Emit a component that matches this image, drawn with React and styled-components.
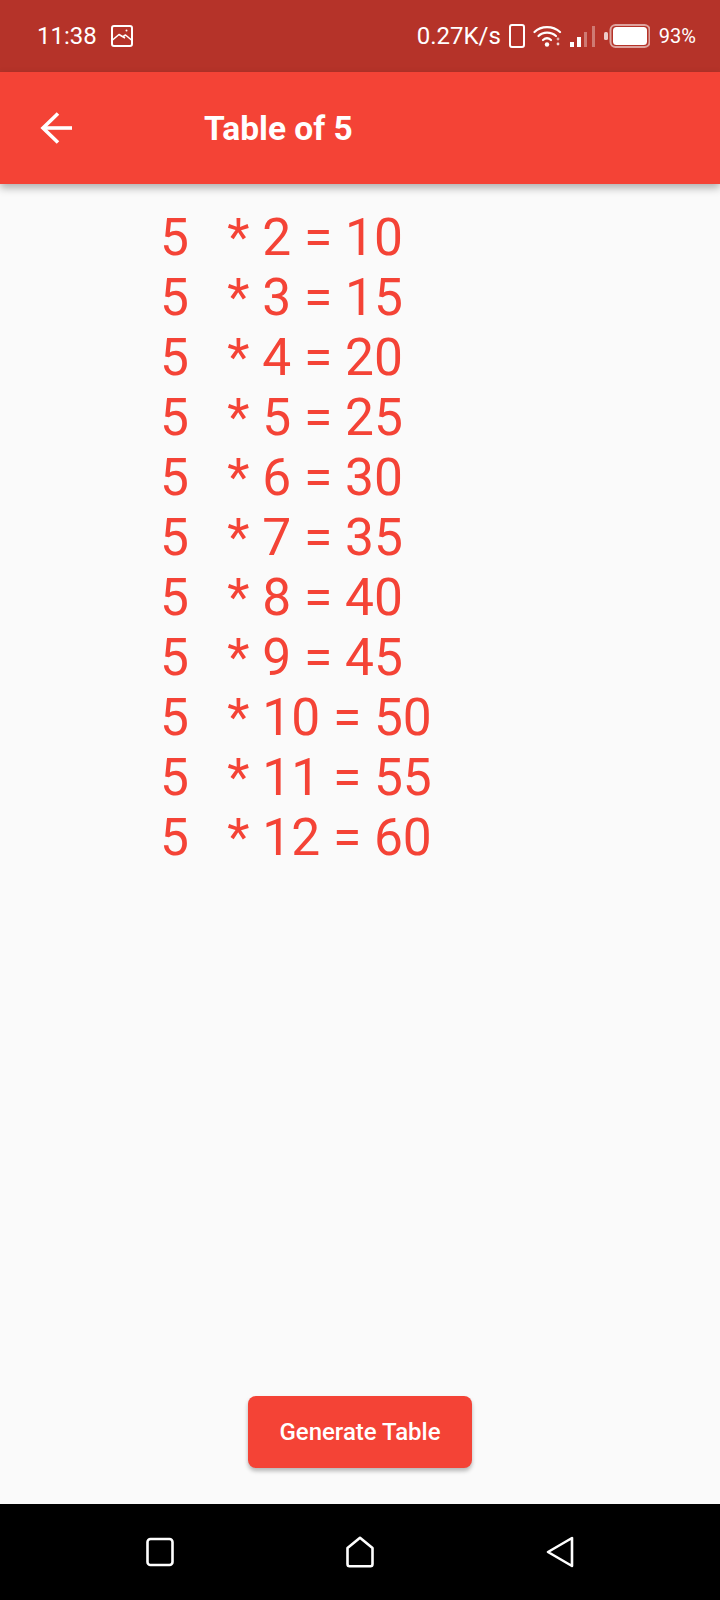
import React from "react";
import styled, { createGlobalStyle } from "styled-components";

const Global = createGlobalStyle`
  html, body { margin: 0; padding: 0; background: #fafafa; }
  * { box-sizing: border-box; }
`;

const Screen = styled.div`
  width: 720px;
  height: 1600px;
  display: flex;
  flex-direction: column;
  font-family: Roboto, "Liberation Sans", sans-serif;
  background: #fafafa;
  overflow: hidden;
`;

const StatusBar = styled.div`
  height: 72px;
  flex: none;
  background: #b53329;
  color: #fff;
  display: flex;
  align-items: center;
  justify-content: space-between;
  padding: 0 24px 0 37px;
`;

const StatusGroup = styled.div`
  display: flex;
  align-items: center;
`;

const Clock = styled.span`
  font-size: 24px;
  letter-spacing: 0;
  margin-right: 14px;
`;

const Speed = styled.span`
  font-size: 24px;
  margin-right: 8px;
`;

const Percent = styled.span`
  font-size: 20px;
  margin-left: 9px;
`;

const AppBar = styled.header`
  height: 112px;
  flex: none;
  background: #f44336;
  color: #fff;
  display: flex;
  align-items: center;
  padding-left: 40px;
  position: relative;
  box-shadow: 0 4px 8px rgba(0, 0, 0, 0.3);
`;

const Title = styled.h1`
  margin: 0 0 0 132px;
  font-size: 33.5px;
  font-weight: 700;
`;

const Content = styled.main`
  flex: 1;
  display: flex;
  flex-direction: column;
  padding: 24px 0 36px 160px;
`;

const Row = styled.div`
  height: 60px;
  line-height: 60px;
  font-size: 51.5px;
  color: #f44336;
  white-space: pre;
`;

const ButtonSlot = styled.div`
  margin-top: auto;
  display: flex;
  justify-content: center;
  margin-left: -160px;
`;

const GenerateButton = styled.button`
  width: 224px;
  height: 72px;
  border: 0;
  border-radius: 8px;
  background: #f44336;
  color: #fff;
  font-family: inherit;
  font-size: 24px;
  font-weight: 500;
  box-shadow: 0 3px 4px rgba(0, 0, 0, 0.28);
`;

const NavBar = styled.nav`
  height: 96px;
  flex: none;
  background: #000;
  display: grid;
  grid-template-columns: repeat(3, 200px);
  justify-content: center;
  align-items: center;
  justify-items: center;
`;

const rows = [2, 3, 4, 5, 6, 7, 8, 9, 10, 11, 12];

export default function App() {
  return (
    <Screen>
      <Global />
      <StatusBar>
        <StatusGroup>
          <Clock>11:38</Clock>
          <svg width="22" height="22" viewBox="0 0 22 22" fill="none" stroke="#fff" strokeWidth="2" strokeLinejoin="round">
            <rect x="1" y="1" width="20" height="20" rx="2" />
            <path d="M1.5 15 L8 9.5 L14 13 M11.5 12 L14.5 10 L20.5 15" strokeWidth="1.6" />
            <circle cx="15.5" cy="5.5" r="1" fill="#fff" stroke="none" />
          </svg>
        </StatusGroup>
        <StatusGroup>
          <Speed>0.27K/s</Speed>
          <svg width="16" height="24" viewBox="0 0 16 24" fill="none" stroke="#fff" strokeWidth="2">
            <rect x="1" y="1" width="14" height="22" rx="2" />
          </svg>
          <svg width="30" height="24" viewBox="0 0 30 24" fill="none" stroke="#fff" strokeWidth="2.2" strokeLinecap="round" style={{ marginLeft: 8 }}>
            <path d="M1.5 8 C8 1.5 20 1.5 27 8" />
            <path d="M5.5 12 C10 7.5 18 7.5 23 12" />
            <path d="M10 16 C12.5 13.8 15.5 13.8 18 16" />
            <circle cx="14" cy="20.5" r="2.2" fill="#fff" stroke="none" />
            <circle cx="25" cy="15" r="1.4" fill="#fff" stroke="none" opacity="0.6" />
            <circle cx="25" cy="20" r="1.4" fill="#fff" stroke="none" opacity="0.8" />
          </svg>
          <svg width="26" height="24" viewBox="0 0 26 24" style={{ marginLeft: 7 }}>
            <rect x="0" y="18" width="4" height="5" fill="#fff" />
            <rect x="7" y="13" width="4" height="10" fill="#fff" />
            <rect x="14" y="8" width="3" height="15" fill="#fff" opacity="0.35" />
            <rect x="22" y="2" width="3" height="21" fill="#fff" opacity="0.35" />
          </svg>
          <svg width="46" height="24" viewBox="0 0 46 24" style={{ marginLeft: 8 }}>
            <rect x="0" y="8" width="4" height="8" rx="1.5" fill="#fff" opacity="0.75" />
            <rect x="6.5" y="1" width="39" height="22" rx="5" fill="none" stroke="#fff" strokeOpacity="0.55" strokeWidth="2" />
            <rect x="9" y="3" width="34" height="18" rx="3.5" fill="#fff" />
          </svg>
          <Percent>93%</Percent>
        </StatusGroup>
      </StatusBar>
      <AppBar>
        <svg width="32" height="32" viewBox="0 0 32 32" fill="none" stroke="#fff" strokeWidth="3.6">
          <path d="M32 16 H3" />
          <path d="M18 1.5 L3 16 L18 30.5" />
        </svg>
        <Title>Table of 5</Title>
      </AppBar>
      <Content>
        {rows.map((n) => (
          <Row key={n}>{`5   * ${n} = ${5 * n}`}</Row>
        ))}
        <ButtonSlot>
          <GenerateButton>Generate Table</GenerateButton>
        </ButtonSlot>
      </Content>
      <NavBar>
        <svg width="28" height="30" viewBox="0 0 28 30" fill="none" stroke="#fff" strokeWidth="2.6">
          <rect x="1.5" y="2" width="25" height="26" rx="3" />
        </svg>
        <svg width="28" height="32" viewBox="0 0 28 32" fill="none" stroke="#fff" strokeWidth="2.6" strokeLinejoin="round">
          <path d="M14 1.8 L26.5 12 V28 Q26.5 30.2 24.5 30.2 H3.5 Q1.5 30.2 1.5 28 V12 Z" />
        </svg>
        <svg width="28" height="32" viewBox="0 0 28 32" fill="none" stroke="#fff" strokeWidth="2.6" strokeLinejoin="round">
          <path d="M26 2 V30 L2 16 Z" />
        </svg>
      </NavBar>
    </Screen>
  );
}
